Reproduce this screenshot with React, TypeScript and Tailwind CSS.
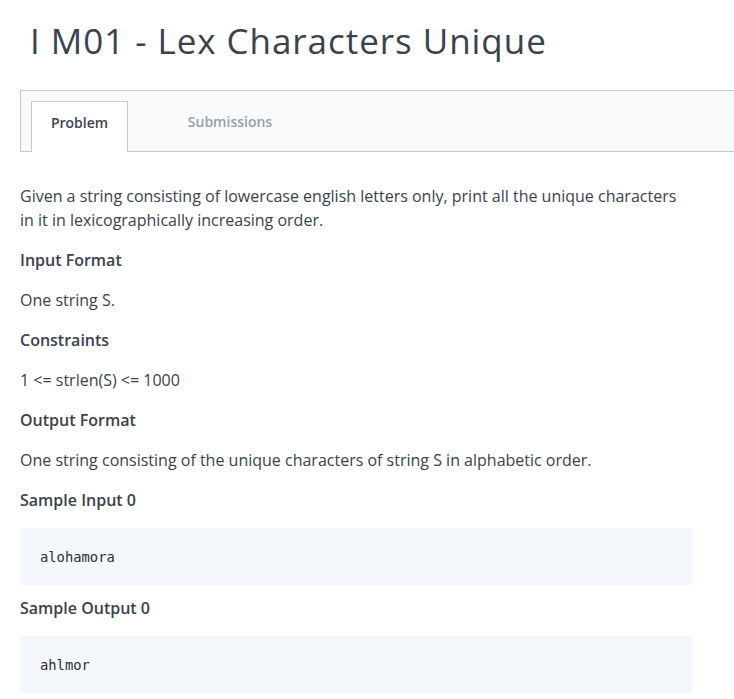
const Section = ({ title, children }: { title: string; children: React.ReactNode }) => (
  <>
    <h3 className="font-semibold text-[16px] leading-[24px] mt-4">{title}</h3>
    {children}
  </>
)

const Code = ({ text }: { text: string }) => (
  <pre
    className="mt-4 mb-[11px] w-[672px] h-[57px] bg-[#f4f8fd] px-5 flex items-center text-[13.8px] text-[#2a2f36]"
    style={{ fontFamily: '"DejaVu Sans Mono", monospace' }}
  >
    {text}
  </pre>
)

export default function App() {
  return (
    <div
      className="bg-white min-h-[699px] w-[734px] overflow-hidden text-[#39424e]"
      style={{ fontFamily: '"Open Sans", sans-serif' }}
    >
      <h1 className="pl-[30px] pt-[16px] text-[35px] leading-[50px] font-medium tracking-[0.95px]">
        I M01 - Lex Characters Unique
      </h1>
      <div className="ml-5 mt-[24px] h-[62px] border border-r-0 border-[#c2c7d0] bg-[#f8f9fb] flex items-end pl-[10px]">
        <button
          type="button"
          className="w-[97px] h-[51px] -mb-px pt-[11px] bg-white border border-b-0 border-[#c2c7d0] text-[14px] leading-[20px] font-semibold text-[#39424e] flex justify-center items-start"
        >
          Problem
        </button>
        <button
          type="button"
          className="w-[204px] h-[51px] pt-[12px] text-[14px] leading-[20px] font-semibold text-[#979faf] flex justify-center items-start"
        >
          Submissions
        </button>
      </div>
      <div className="ml-5 mt-[32px] text-[16px] leading-[24px]">
        <p className="w-[670px]">
          Given a string consisting of lowercase english letters only, print all the unique characters in it in
          lexicographically increasing order.
        </p>
        <Section title="Input Format">
          <p className="mt-4">One string S.</p>
        </Section>
        <Section title="Constraints">
          <p className="mt-4">1 &lt;= strlen(S) &lt;= 1000</p>
        </Section>
        <Section title="Output Format">
          <p className="mt-4">One string consisting of the unique characters of string S in alphabetic order.</p>
        </Section>
        <Section title="Sample Input 0">
          <Code text="alohamora" />
        </Section>
        <h3 className="font-semibold text-[16px] leading-[24px]">Sample Output 0</h3>
        <Code text="ahlmor" />
      </div>
    </div>
  )
}
